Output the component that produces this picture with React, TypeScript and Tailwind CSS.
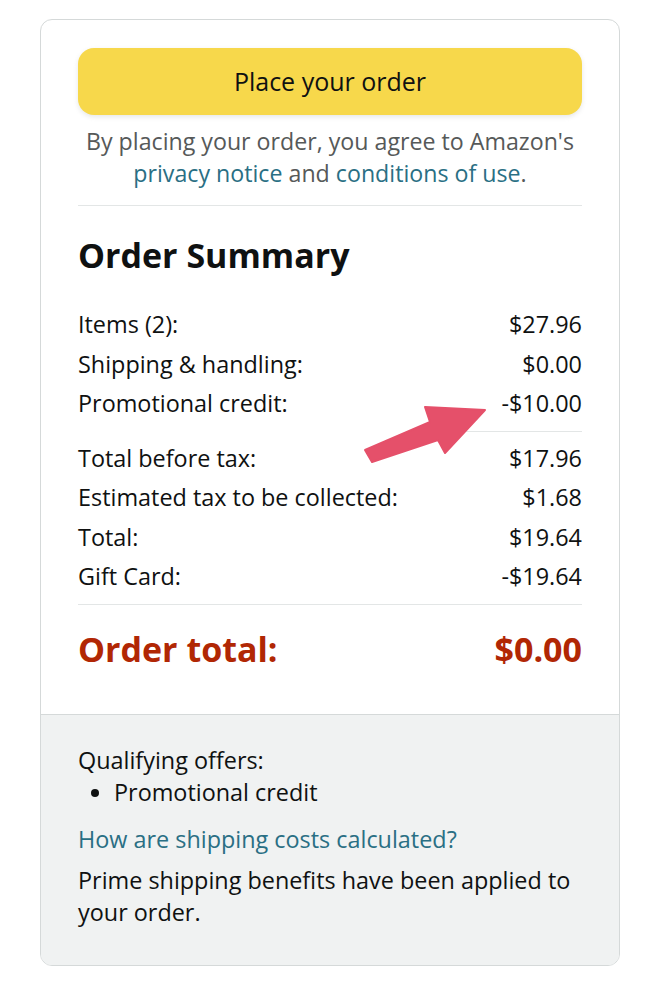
import React from "react";

const rowsA = [
  { label: "Items (2):", value: "$27.96" },
  { label: "Shipping & handling:", value: "$0.00" },
  { label: "Promotional credit:", value: "-$10.00" },
];

const rowsB = [
  { label: "Total before tax:", value: "$17.96" },
  { label: "Estimated tax to be collected:", value: "$1.68" },
  { label: "Total:", value: "$19.64" },
  { label: "Gift Card:", value: "-$19.64" },
];

function Row({ label, value }: { label: string; value: string }) {
  return (
    <div className="flex items-center justify-between text-[23.4px] leading-[39.5px] text-[#0f1111]">
      <span>{label}</span>
      <span>{value}</span>
    </div>
  );
}

export default function App() {
  return (
    <div
      className="relative min-h-[992px] w-[662px] bg-white pt-[19px] pl-[40px]"
      style={{ fontFamily: '"Open Sans", "Liberation Sans", sans-serif' }}
    >
      <div className="w-[580px] overflow-hidden rounded-[12px] border-[1.5px] border-[#d5d9d9] bg-white">
        {/* Top: button + summary */}
        <div className="px-[37px] pt-[28px] pb-[45px]">
          <button className="flex h-[67px] w-full items-center justify-center rounded-[16px] bg-[#f7d84b] text-[25px] text-[#0f1111] shadow-[0_2px_5px_rgba(213,217,217,0.6)]">
            Place your order
          </button>
          <p className="mt-[10px] text-center text-[23.2px] leading-[32px] text-[#565959]">
            By placing your order, you agree to Amazon's
            <br />
            <span className="text-[#2a6f84]">privacy notice</span> and{" "}
            <span className="text-[#2a6f84]">conditions of use</span>.
          </p>
          <div className="mt-[16px] h-px bg-[#e3e6e6]" />

          <h2 className="mt-[29px] text-[34px] font-bold leading-[40px] text-[#0f1111]">
            Order Summary
          </h2>

          <div className="mt-[30px]">
            {rowsA.map((r) => (
              <Row key={r.label} {...r} />
            ))}
          </div>
          <div className="mt-[7px] ml-auto h-px w-[124px] bg-[#e3e6e6]" />
          <div className="mt-[7px]">
            {rowsB.map((r) => (
              <Row key={r.label} {...r} />
            ))}
          </div>
          <div className="mt-[7px] h-px bg-[#e3e6e6]" />

          <div className="mt-[24px] flex items-center justify-between text-[34px] font-bold leading-[40px] text-[#b12704]">
            <span>Order total:</span>
            <span>$0.00</span>
          </div>
        </div>

        {/* Bottom: qualifying offers */}
        <div className="border-t-[1.5px] border-[#d5d9d9] bg-[#f0f2f2] px-[37px] pt-[29px] pb-[37px] text-[23.4px] leading-[32px] text-[#0f1111]">
          <p>Qualifying offers:</p>
          <ul className="list-disc pl-[36px]">
            <li>Promotional credit</li>
          </ul>
          <p className="mt-[15px] text-[#2a6f84]">How are shipping costs calculated?</p>
          <p className="mt-[9px]">
            Prime shipping benefits have been applied to
            <br />
            your order.
          </p>
        </div>
      </div>

      {/* annotation arrow */}
      <svg
        className="absolute left-[360px] top-[400px] h-[70px] w-[130px]"
        viewBox="360 400 130 70"
      >
        <polygon
          points="365,450 430,422 425,407 485,410 445,453 438,440 372,462"
          fill="#e5506a"
          stroke="#e5506a"
          strokeWidth="2"
          strokeLinejoin="round"
        />
      </svg>
    </div>
  );
}
